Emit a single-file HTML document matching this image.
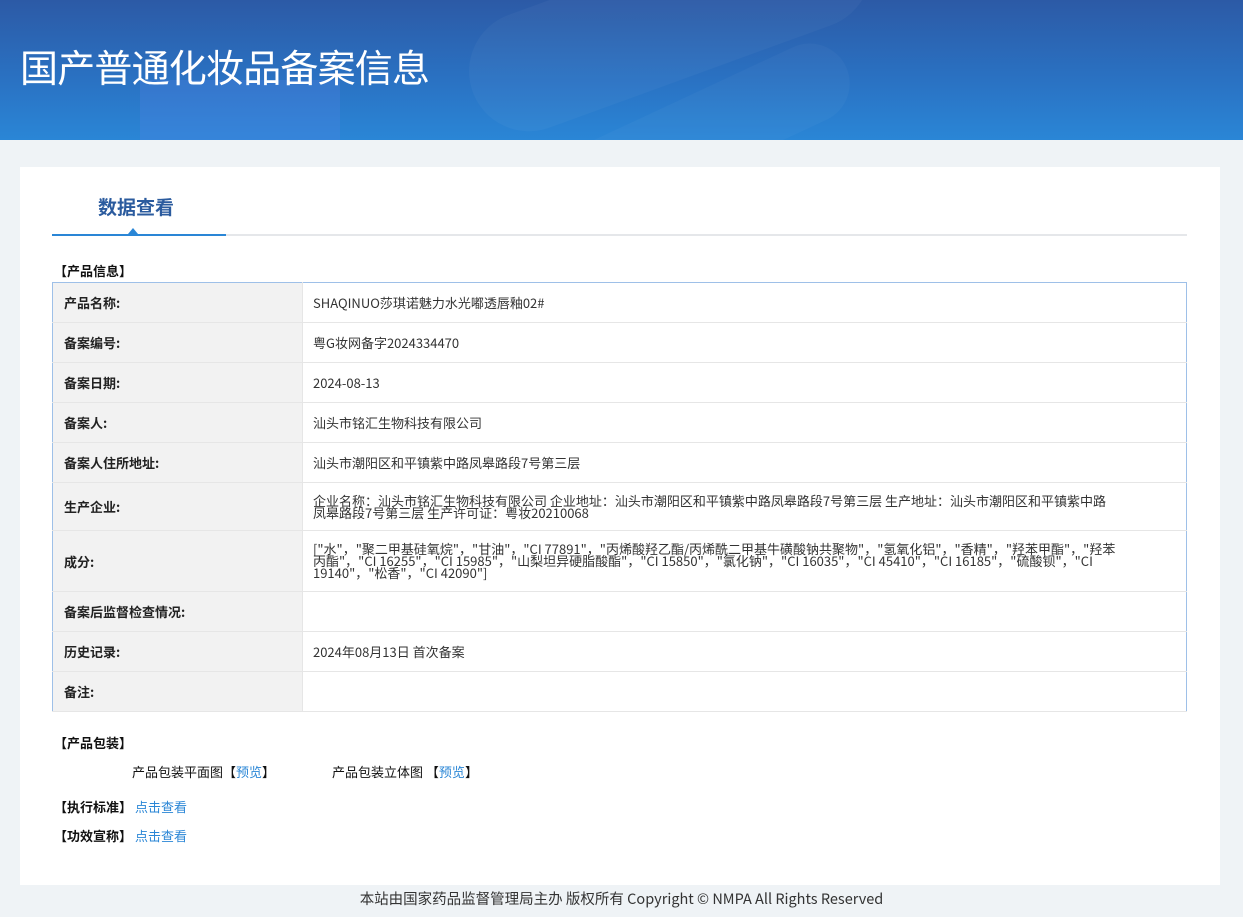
<!DOCTYPE html>
<html><head><meta charset="utf-8"><style>
*{margin:0;padding:0;box-sizing:border-box}
body{width:1243px;height:917px;background:#eff3f6;font-family:"Noto Sans CJK SC","Liberation Sans",sans-serif;color:#222;position:relative;overflow:hidden}
.hdr{position:absolute;left:0;top:0;width:1243px;height:140px;background:linear-gradient(180deg,#2c5aa6 0%,#2a73c4 60%,#2a86d6 100%);overflow:hidden}
.hdr h1{position:absolute;left:20px;top:40px;font-size:38px;font-weight:normal;color:#fff;letter-spacing:-0.8px;line-height:52px}
.card{position:absolute;left:20px;top:167px;width:1200px;height:718px;background:#fff}
.tab{position:absolute;left:78px;top:26px;font-size:19px;font-weight:bold;color:#2b5b9e}
.gl{position:absolute;left:32px;top:67px;width:1135px;height:2px;background:#e5e7ea}
.bl{position:absolute;left:32px;top:67px;width:174px;height:2px;background:#2a86d6}
.tri{position:absolute;left:108px;top:61px;width:0;height:0;border-left:5px solid transparent;border-right:5px solid transparent;border-bottom:6px solid #2a86d6}
.sec{position:absolute;left:34px;font-size:13px;font-weight:bold;color:#111;line-height:18px}
table{position:absolute;left:32px;top:115px;width:1135px;border-collapse:collapse;border:1px solid #9ec0e8;font-size:13px}
td{border-bottom:1px solid #e6e6e6;vertical-align:middle}
td.l{width:250px;background:#f2f2f2;font-weight:bold;padding-left:11px;border-right:1px solid #e6e6e6}
td.v{padding-left:10px;padding-right:58px;line-height:12px;color:#333}
.t{position:absolute;font-size:13px;color:#111;line-height:18px}
a{color:#2a86d6;text-decoration:none}
.ft{position:absolute;left:0;top:889px;width:1243px;text-align:center;font-size:14.5px;color:#333;line-height:20px}
</style></head><body>
<div class="hdr">
<div style="position:absolute;left:140px;top:80px;width:200px;height:70px;background:rgba(90,130,230,.25)"></div>
<div style="position:absolute;left:460px;top:-40px;width:420px;height:120px;border-radius:60px;background:rgba(255,255,255,.035);transform:rotate(-20deg)"></div>
<div style="position:absolute;left:560px;top:90px;width:300px;height:80px;border-radius:40px;background:rgba(255,255,255,.03);transform:rotate(-25deg)"></div>
<h1>国产普通化妆品备案信息</h1>
</div>
<div class="card">
<div class="tab">数据查看</div>
<div class="gl"></div><div class="bl"></div><div class="tri"></div>
<div class="sec" style="top:95px">【产品信息】</div>
<table>
<tr style="height:40px"><td class="l">产品名称:</td><td class="v">SHAQINUO莎琪诺魅力水光嘟透唇釉02#</td></tr>
<tr style="height:40px"><td class="l">备案编号:</td><td class="v">粤G妆网备字2024334470</td></tr>
<tr style="height:40px"><td class="l">备案日期:</td><td class="v">2024-08-13</td></tr>
<tr style="height:40px"><td class="l">备案人:</td><td class="v">汕头市铭汇生物科技有限公司</td></tr>
<tr style="height:40px"><td class="l">备案人住所地址:</td><td class="v">汕头市潮阳区和平镇紫中路凤皋路段7号第三层</td></tr>
<tr style="height:48px"><td class="l">生产企业:</td><td class="v">企业名称：汕头市铭汇生物科技有限公司 企业地址：汕头市潮阳区和平镇紫中路凤皋路段7号第三层 生产地址：汕头市潮阳区和平镇紫中路<br>凤皋路段7号第三层 生产许可证：粤妆20210068</td></tr>
<tr style="height:61px"><td class="l">成分:</td><td class="v">["水"，"聚二甲基硅氧烷"，"甘油"，"CI 77891"，"丙烯酸羟乙酯/丙烯酰二甲基牛磺酸钠共聚物"，"氢氧化铝"，"香精"，"羟苯甲酯"，"羟苯<br>丙酯"，"CI 16255"，"CI 15985"，"山梨坦异硬脂酸酯"，"CI 15850"，"氯化钠"，"CI 16035"，"CI 45410"，"CI 16185"，"硫酸钡"，"CI<br>19140"，"松香"，"CI 42090"]</td></tr>
<tr style="height:40px"><td class="l">备案后监督检查情况:</td><td class="v"></td></tr>
<tr style="height:40px"><td class="l">历史记录:</td><td class="v">2024年08月13日 首次备案</td></tr>
<tr style="height:40px"><td class="l">备注:</td><td class="v"></td></tr>
</table>
<div class="sec" style="top:567px">【产品包装】</div>
<div class="t" style="left:112px;top:596px">产品包装平面图【<a>预览</a>】</div>
<div class="t" style="left:312px;top:596px">产品包装立体图 【<a>预览</a>】</div>
<div class="sec" style="top:631px">【执行标准】 <a style="font-weight:normal">点击查看</a></div>
<div class="sec" style="top:660px">【功效宣称】 <a style="font-weight:normal">点击查看</a></div>
</div>
<div class="ft">本站由国家药品监督管理局主办 版权所有 Copyright © NMPA All Rights Reserved</div>
</body></html>
